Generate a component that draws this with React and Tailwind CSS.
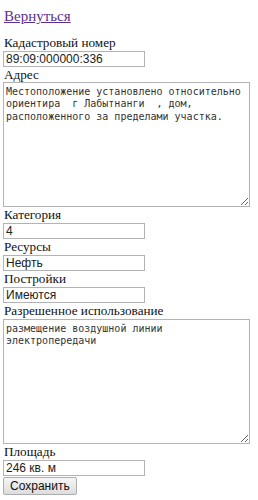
import React from "react";

const serif = "font-['Liberation_Serif',serif]";
const sans = "font-['Liberation_Sans',Arial,sans-serif]";
const mono = "font-['DejaVu_Sans_Mono',monospace]";

const Label = ({ children, short }) => (
  <div className={`${serif} text-[13.2px] leading-[16px] ${short ? "h-[15px]" : "h-[16px]"} text-[#111] pl-[1px]`}>{children}</div>
);

const Field = ({ value }) => (
  <input
    readOnly
    value={value}
    className={`${sans} block w-[142px] h-[16px] border border-[#b3b3b3] bg-white px-[2px] text-[12px] leading-[14px] text-[#222] outline-none`}
  />
);

const Area = ({ value }) => (
  <textarea
    readOnly
    value={value}
    className={`${mono} block w-[247px] h-[125px] border border-[#b3b3b3] bg-white px-[2px] pt-[3px] text-[10px] leading-[12.4px] text-[#333] outline-none resize-y`}
  />
);

export default function App() {
  return (
    <div className="w-[258px] h-[500px] bg-white pl-[3px] pt-[8px]">
      <a href="#" className={`${serif} block w-fit h-[16px] text-[15px] leading-[16px] text-[#5b2f91] underline pl-[1px]`}>
        Вернуться
      </a>
      <div className="h-[11px]" />
      <Label>Кадастровый номер</Label>
      <Field value="89:09:000000:336" />
      <Label short>Адрес</Label>
      <Area value="Местоположение установлено относительно ориентира  г Лабытнанги  , дом, расположенного за пределами участка." />
      <Label>Категория</Label>
      <Field value="4" />
      <Label>Ресурсы</Label>
      <Field value="Нефть" />
      <Label>Постройки</Label>
      <Field value="Имеются" />
      <Label>Разрешенное использование</Label>
      <Area value="размещение воздушной линии электропередачи" />
      <Label>Площадь</Label>
      <Field value="246 кв. м" />
      <button
        className={`${sans} mt-[1px] block h-[18px] px-[6px] border border-[#adadad] rounded-[2px] bg-gradient-to-b from-[#f6f6f6] to-[#dddddd] text-[12px] leading-[14px] text-[#111]`}
      >
        Сохранить
      </button>
    </div>
  );
}
